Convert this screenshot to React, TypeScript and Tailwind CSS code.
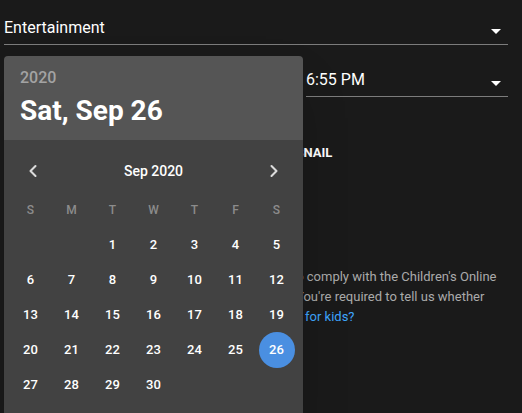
import React from 'react';
import { ChevronLeft, ChevronRight } from 'lucide-react';

const weekDays = ['S', 'M', 'T', 'W', 'T', 'F', 'S'];

// September 2020 starts on a Tuesday
const weeks: (number | null)[][] = [
  [null, null, 1, 2, 3, 4, 5],
  [6, 7, 8, 9, 10, 11, 12],
  [13, 14, 15, 16, 17, 18, 19],
  [20, 21, 22, 23, 24, 25, 26],
  [27, 28, 29, 30, null, null, null],
];

const DropArrow: React.FC = () => (
  <svg width="24" height="24" viewBox="0 0 24 24" className="shrink-0 -my-[1px] translate-y-[3px] fill-white">
    <path d="M7 10l5 5 5-5z" />
  </svg>
);

const SelectField: React.FC<{ value: string; className?: string }> = ({ value, className }) => (
  <div className={`flex items-center justify-between border-b border-[#7c7c7c] pb-[5px] ${className ?? ''}`}>
    <span className="h-[22px] text-[16px] leading-[22px] text-white">{value}</span>
    <DropArrow />
  </div>
);

const DatePicker: React.FC = () => {
  return (
    <div className="absolute left-[4px] top-[56px] w-[299px] h-[380px] rounded-[4px] overflow-hidden shadow-2xl">
      <div className="h-[84px] bg-[#555555] px-4 pt-3">
        <div className="text-[16px] leading-[20px] font-medium text-[#a3a3a3]">2020</div>
        <div className="mt-[6px] text-[28px] leading-[34px] font-bold text-white">Sat, Sep 26</div>
      </div>

      <div className="h-full bg-[#424242] px-[6px] pt-[13px]">
        <div className="flex h-[36px] items-center justify-between px-[13px]">
          <ChevronLeft size={20} strokeWidth={2.5} className="text-[#dcdcdc]" />
          <span className="text-[14px] font-medium text-white">Sep 2020</span>
          <ChevronRight size={20} strokeWidth={2.5} className="text-[#dcdcdc]" />
        </div>

        <div className="mt-[4px] grid grid-cols-7 h-[34px] items-center">
          {weekDays.map((d, i) => (
            <span key={i} className="text-center text-[12px] font-medium text-[#8c8c8c]">
              {d}
            </span>
          ))}
        </div>

        {weeks.map((week, wi) => (
          <div key={wi} className="grid grid-cols-7 h-[35px] items-center">
            {week.map((day, di) => (
              <div key={di} className="flex justify-center">
                {day === 26 ? (
                  <span className="flex h-[36px] w-[36px] items-center justify-center rounded-full bg-[#4a8fe1] text-[13px] font-medium text-white">
                    {day}
                  </span>
                ) : (
                  <span className="text-[13px] font-medium text-white">{day ?? ''}</span>
                )}
              </div>
            ))}
          </div>
        ))}
      </div>
    </div>
  );
};

export default function App() {
  return (
    <div className="relative w-[522px] h-[413px] overflow-hidden bg-[#1a1a1a] font-['Roboto',sans-serif]">
      <div className="ml-[4px] w-[504px] pt-[17px]">
        <SelectField value="Entertainment" />

        <div className="mt-6 flex gap-4">
          {/* date field sits under the open picker */}
          <SelectField value="" className="w-[286px]" />
          <SelectField value="6:55 PM" className="flex-1" />
        </div>

        <h3 className="mt-[48px] ml-[254px] text-[13px] leading-[16px] font-bold text-white">THUMBNAIL</h3>

        <div className="mt-[106px] text-[13px] leading-[20px] text-[#aaaaaa] whitespace-nowrap">
          <p className="pl-[288px]">to comply with the Children's Online</p>
          <p className="pl-[292px]">You're required to tell us whether</p>
          <p className="pl-[301px] text-[#3ea6ff]">for kids?</p>
        </div>
      </div>

      <DatePicker />
    </div>
  );
}
